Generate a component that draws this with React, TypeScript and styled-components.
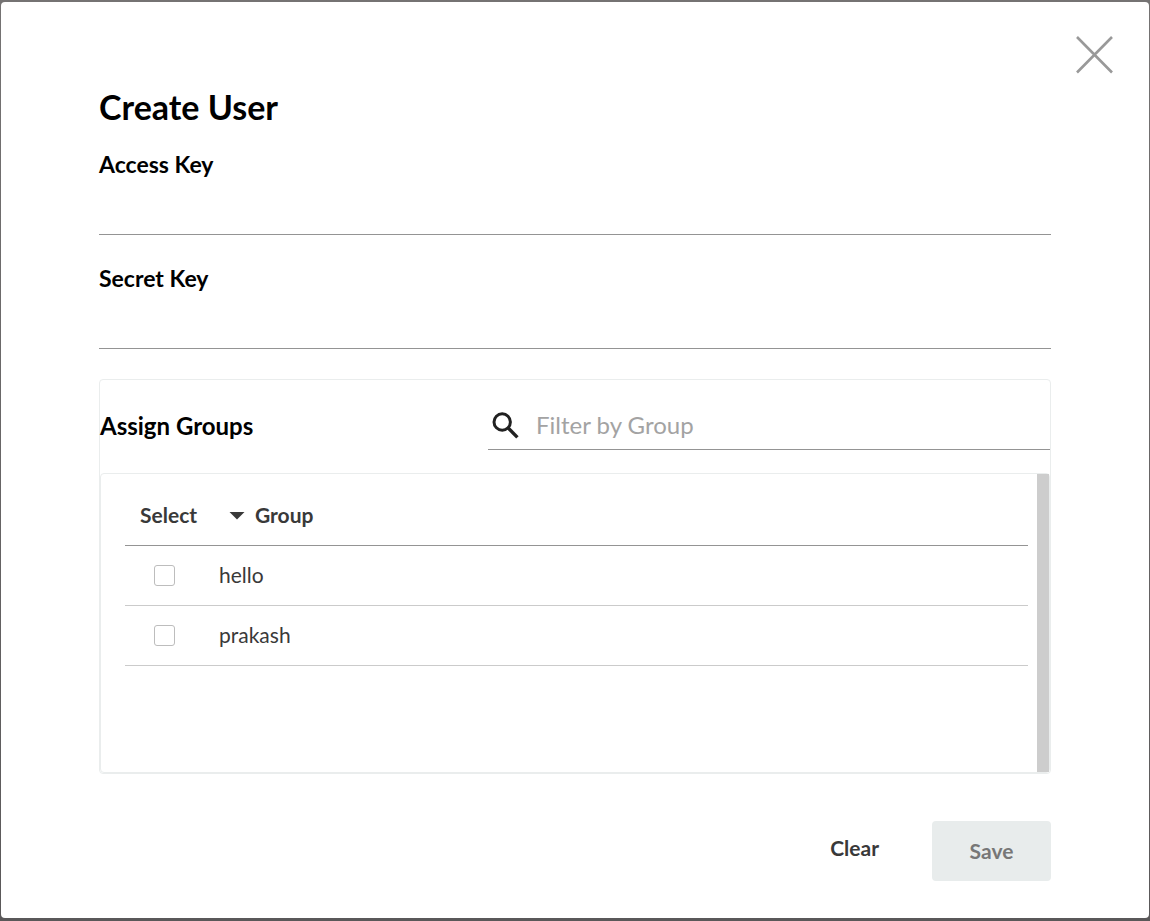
import React, { useState } from "react";
import styled, { createGlobalStyle } from "styled-components";

const GlobalStyle = createGlobalStyle`
  * { box-sizing: border-box; }
  body {
    margin: 0;
    background: #5a5859;
    font-family: Lato, "Liberation Sans", sans-serif;
    color: #393939;
  }
  button, input { font-family: inherit; }
`;

const Backdrop = styled.div`
  display: flex;
  min-height: 100vh;
  padding: 2px 1px 3px;
  background: linear-gradient(#757373, #5a5859);
`;

const Dialog = styled.section`
  flex: 1;
  min-width: 0;
  background: #fff;
  border-radius: 4px;
`;

const DialogBar = styled.header`
  display: flex;
  justify-content: flex-end;
  padding: 32px 34px 13px;
`;

const CloseButton = styled.button`
  display: block;
  width: 40px;
  height: 40px;
  padding: 0;
  border: 0;
  background: none;
  cursor: pointer;
`;

const Form = styled.form`
  padding: 0 98px 36px;
`;

const Title = styled.h1`
  margin: 0 0 24px;
  font-size: 34px;
  line-height: 40px;
  font-weight: 700;
  color: #000;
`;

const Field = styled.div`
  margin-bottom: 30px;
`;

const FieldLabel = styled.label`
  display: block;
  font-size: 23px;
  line-height: 26px;
  font-weight: 700;
  color: #000;
`;

const TextInput = styled.input`
  display: block;
  width: 100%;
  height: 58px;
  padding: 0;
  border: 0;
  border-bottom: 1px solid #949494;
  border-radius: 0;
  background: none;
  font-size: 24px;
  outline: none;
`;

const Panel = styled.div`
  border: 1px solid #eaeded;
  border-radius: 4px;
`;

const PanelHeader = styled.div`
  display: grid;
  grid-template-columns: 388px 1fr;
  align-items: center;
  padding: 22px 0 23px;
`;

const PanelTitle = styled.h2`
  margin: 0;
  font-size: 24px;
  line-height: 48px;
  font-weight: 700;
  color: #000;
`;

const Search = styled.label`
  display: flex;
  align-items: center;
  height: 48px;
  padding-left: 4px;
  gap: 16px;
  border-bottom: 1px solid #949494;
`;

const SearchInput = styled.input`
  flex: 1;
  min-width: 0;
  height: 46px;
  padding: 0 0 2px;
  border: 0;
  background: none;
  font-size: 24px;
  outline: none;
  &::placeholder { color: #a3a3a3; opacity: 1; }
`;

const TableBox = styled.div`
  display: flex;
  height: 300px;
  border: 1px solid #eaeded;
  border-radius: 4px;
`;

const TableArea = styled.div`
  flex: 1;
  min-width: 0;
  padding: 12px 9px 0 24px;
`;

const ScrollTrack = styled.div`
  width: 12px;
  background: #cdcdcd;
`;

const Table = styled.table`
  width: 100%;
  table-layout: fixed;
  border-spacing: 0;
  font-size: 21px;
  line-height: 26px;
`;

const HeadCell = styled.th<{ $width?: string; $indent?: string }>`
  width: ${(p) => p.$width ?? "auto"};
  height: 60px;
  padding: 0 0 2px ${(p) => p.$indent ?? "0"};
  border-bottom: 1px solid #949494;
  text-align: left;
  font-weight: 700;
`;

const SortButton = styled.button`
  display: flex;
  align-items: center;
  padding: 0;
  border: 0;
  background: none;
  color: inherit;
  font-size: 21px;
  line-height: 26px;
  font-weight: 700;
  cursor: pointer;
`;

const CheckCell = styled.td`
  height: 60px;
  padding: 0 0 0 29px;
  border-bottom: 1px solid #cbcbcb;
`;

const NameCell = styled.td`
  height: 60px;
  padding: 0 0 2px;
  border-bottom: 1px solid #cbcbcb;
`;

const Checkbox = styled.input`
  display: block;
  appearance: none;
  width: 21px;
  height: 21px;
  margin: 0;
  border: 1px solid #bdbdbd;
  border-radius: 3px;
  background: #fff;
  &:checked { background: #393939; }
`;

const Actions = styled.footer`
  display: flex;
  justify-content: flex-end;
  align-items: flex-start;
  gap: 29px;
  margin-top: 47px;
`;

const ClearButton = styled.button`
  height: 54px;
  padding: 0 24px 2px;
  border: 0;
  background: none;
  color: #393939;
  font-size: 21px;
  font-weight: 700;
  cursor: pointer;
`;

const SaveButton = styled.button`
  width: 119px;
  height: 60px;
  padding: 0 0 2px;
  border: 0;
  border-radius: 4px;
  background: #e8ecec;
  color: #777;
  font-size: 21px;
  font-weight: 700;
`;

const groups = ["hello", "prakash"];

export default function App() {
  const [accessKey, setAccessKey] = useState("");
  const [secretKey, setSecretKey] = useState("");
  const [filter, setFilter] = useState("");
  const [selected, setSelected] = useState<string[]>([]);

  const toggle = (name: string) =>
    setSelected((s) => (s.includes(name) ? s.filter((n) => n !== name) : [...s, name]));

  const clear = () => {
    setAccessKey("");
    setSecretKey("");
    setSelected([]);
  };

  return (
    <>
      <GlobalStyle />
      <Backdrop>
        <Dialog role="dialog" aria-labelledby="dialog-title">
          <DialogBar>
            <CloseButton type="button" aria-label="Close">
              <svg width="40" height="40" viewBox="0 0 40 40" fill="none" stroke="#999" strokeWidth="2.6">
                <path d="M2 3 37 38.5M37 3 2 38.5" />
              </svg>
            </CloseButton>
          </DialogBar>
          <Form onSubmit={(e) => e.preventDefault()}>
            <Title id="dialog-title">Create User</Title>
            <Field>
              <FieldLabel htmlFor="access-key">Access Key</FieldLabel>
              <TextInput id="access-key" value={accessKey} onChange={(e) => setAccessKey(e.target.value)} />
            </Field>
            <Field>
              <FieldLabel htmlFor="secret-key">Secret Key</FieldLabel>
              <TextInput
                id="secret-key"
                type="password"
                value={secretKey}
                onChange={(e) => setSecretKey(e.target.value)}
              />
            </Field>
            <Panel>
              <PanelHeader>
                <PanelTitle>Assign Groups</PanelTitle>
                <Search>
                  <svg width="28" height="28" viewBox="0 0 28 28" fill="none" stroke="#212121">
                    <circle cx="10.2" cy="10" r="8.2" strokeWidth="3" />
                    <path d="M16.2 16 25.4 25.4" strokeWidth="3.4" />
                  </svg>
                  <SearchInput
                    aria-label="Filter by Group"
                    placeholder="Filter by Group"
                    value={filter}
                    onChange={(e) => setFilter(e.target.value)}
                  />
                </Search>
              </PanelHeader>
              <TableBox>
                <TableArea>
                  <Table>
                    <thead>
                      <tr>
                        <HeadCell $width="94px" $indent="15px">Select</HeadCell>
                        <HeadCell>
                          <SortButton type="button">
                            <svg width="36" height="26" viewBox="0 0 36 26" fill="#393939">
                              <path d="M10.5 10h15L18 17.5z" />
                            </svg>
                            Group
                          </SortButton>
                        </HeadCell>
                      </tr>
                    </thead>
                    <tbody>
                      {groups
                        .filter((name) => name.includes(filter))
                        .map((name) => (
                          <tr key={name}>
                            <CheckCell>
                              <Checkbox
                                type="checkbox"
                                id={`group-${name}`}
                                checked={selected.includes(name)}
                                onChange={() => toggle(name)}
                              />
                            </CheckCell>
                            <NameCell>
                              <label htmlFor={`group-${name}`}>{name}</label>
                            </NameCell>
                          </tr>
                        ))}
                    </tbody>
                  </Table>
                </TableArea>
                <ScrollTrack />
              </TableBox>
            </Panel>
            <Actions>
              <ClearButton type="button" onClick={clear}>Clear</ClearButton>
              <SaveButton type="submit" disabled>Save</SaveButton>
            </Actions>
          </Form>
        </Dialog>
      </Backdrop>
    </>
  );
}
